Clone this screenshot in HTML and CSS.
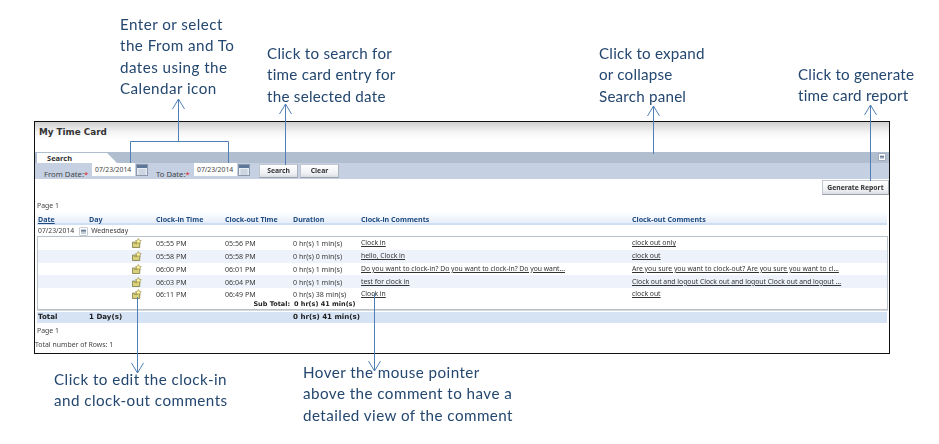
FILE: index.html
```html
<!DOCTYPE html>
<html lang="en">
<head>
<meta charset="utf-8">
<title>My Time Card</title>
<link rel="stylesheet" href="styles.css">
</head>
<body>
<main class="frame">
  <header class="title-bar"><h1>My Time Card</h1></header>
  <div class="tab-strip">
    <span class="tab">Search</span>
    <button class="collapse" aria-label="Collapse"></button>
  </div>
  <form class="search-panel">
    <label class="date-label">From Date:<i>*</i></label>
    <span class="date-input">07/23/2014</span>
    <svg class="cal" viewBox="0 0 12 12"><rect x="0.5" y="0.5" width="11" height="11" fill="#e8edf4" stroke="#8c99ac"/><rect x="1" y="1" width="10" height="3" fill="#5d7798"/><path d="M2 6h8M2 8h8M2 10h8M4 5v6M6 5v6M8 5v6" stroke="#b4bfce" stroke-width=".6"/></svg>
    <label class="date-label to">To Date:<i>*</i></label>
    <span class="date-input">07/23/2014</span>
    <svg class="cal" viewBox="0 0 12 12"><rect x="0.5" y="0.5" width="11" height="11" fill="#e8edf4" stroke="#8c99ac"/><rect x="1" y="1" width="10" height="3" fill="#5d7798"/><path d="M2 6h8M2 8h8M2 10h8M4 5v6M6 5v6M8 5v6" stroke="#b4bfce" stroke-width=".6"/></svg>
    <span class="btn search-btn">Search</span>
    <span class="btn">Clear</span>
  </form>
  <div class="actions"><span class="btn report">Generate Report</span></div>
  <p class="page page-top">Page 1</p>
  <div class="grid head">
    <a class="sort">Date</a><span>Day</span><span>Clock-in Time</span><span>Clock-out Time</span><span>Duration</span><span>Clock-in Comments</span><span>Clock-out Comments</span>
  </div>
  <div class="group"><span>07/23/2014</span><span class="mini"></span><span>Wednesday</span></div>
  <section class="box">
    <div class="grid row"><span></span><span class="ico"><svg viewBox="0 0 11 11"><path d="M.5 4.500h8v6h-8z" fill="#d9d27a" stroke="#6e6d3c" stroke-width=".8"/><path d="M2 6h3" stroke="#8f8c4a" stroke-width=".7"/><path d="M7 .5l1 2 2.200.4-1.600 1.500.4 2.100-2-1.100-2 1.100.4-2.100L3.800 2.900l2.200-.4z" fill="#fbf2a0" stroke="#8a7a2a" stroke-width=".6"/></svg></span><span>05:55 PM</span><span>05:56 PM</span><span>0 hr(s) 1 min(s)</span><a>Clock in</a><a>clock out only</a></div>
    <div class="grid row alt"><span></span><span class="ico"><svg viewBox="0 0 11 11"><path d="M.5 4.500h8v6h-8z" fill="#d9d27a" stroke="#6e6d3c" stroke-width=".8"/><path d="M2 6h3" stroke="#8f8c4a" stroke-width=".7"/><path d="M7 .5l1 2 2.200.4-1.600 1.500.4 2.100-2-1.100-2 1.100.4-2.100L3.800 2.900l2.200-.4z" fill="#fbf2a0" stroke="#8a7a2a" stroke-width=".6"/></svg></span><span>05:58 PM</span><span>05:58 PM</span><span>0 hr(s) 0 min(s)</span><a>hello, Clock in</a><a>clock out</a></div>
    <div class="grid row"><span></span><span class="ico"><svg viewBox="0 0 11 11"><path d="M.5 4.500h8v6h-8z" fill="#d9d27a" stroke="#6e6d3c" stroke-width=".8"/><path d="M2 6h3" stroke="#8f8c4a" stroke-width=".7"/><path d="M7 .5l1 2 2.200.4-1.600 1.500.4 2.100-2-1.100-2 1.100.4-2.100L3.800 2.900l2.200-.4z" fill="#fbf2a0" stroke="#8a7a2a" stroke-width=".6"/></svg></span><span>06:00 PM</span><span>06:01 PM</span><span>0 hr(s) 1 min(s)</span><a>Do you want to clock-in? Do you want to clock-in? Do you want...</a><a>Are you sure you want to clock-out? Are you sure you want to cl...</a></div>
    <div class="grid row alt"><span></span><span class="ico"><svg viewBox="0 0 11 11"><path d="M.5 4.500h8v6h-8z" fill="#d9d27a" stroke="#6e6d3c" stroke-width=".8"/><path d="M2 6h3" stroke="#8f8c4a" stroke-width=".7"/><path d="M7 .5l1 2 2.200.4-1.600 1.500.4 2.100-2-1.100-2 1.100.4-2.100L3.800 2.900l2.200-.4z" fill="#fbf2a0" stroke="#8a7a2a" stroke-width=".6"/></svg></span><span>06:03 PM</span><span>06:04 PM</span><span>0 hr(s) 1 min(s)</span><a>test for clock in</a><a>Clock out and logout Clock out and logout Clock out and logout ...</a></div>
    <div class="grid row"><span></span><span class="ico"><svg viewBox="0 0 11 11"><path d="M.5 4.500h8v6h-8z" fill="#d9d27a" stroke="#6e6d3c" stroke-width=".8"/><path d="M2 6h3" stroke="#8f8c4a" stroke-width=".7"/><path d="M7 .5l1 2 2.200.4-1.600 1.500.4 2.100-2-1.100-2 1.100.4-2.100L3.800 2.900l2.200-.4z" fill="#fbf2a0" stroke="#8a7a2a" stroke-width=".6"/></svg></span><span>06:11 PM</span><span>06:49 PM</span><span>0 hr(s) 38 min(s)</span><a>Clock in</a><a>clock out</a></div>
    <div class="subtotal"><b>Sub Total:</b><b>0 hr(s) 41 min(s)</b></div>
  </section>
  <div class="grid total"><b>Total</b><b class="wide">1 Day(s)</b><b class="dur">0 hr(s) 41 min(s)</b></div>
  <p class="page page-bottom">Page 1</p>
  <p class="page rows">Total number of Rows: 1</p>
</main>

<svg class="arrows" viewBox="0 0 939 444">
  <g fill="none" stroke="#4f7fb5" stroke-width="1">
    <path d="M178.500 99V141.500M130.500 163V141.500H228.500V163"/><path d="M172.500 109L178.500 99L184.500 109"/>
    <path d="M285.500 104V165"/><path d="M279.500 114L285.500 104L291.500 114"/>
    <path d="M653.500 106V154"/><path d="M647.500 116L653.500 106L659.500 116"/>
    <path d="M870.500 105V181"/><path d="M864.500 115L870.500 105L876.500 115"/>
    <path d="M137.500 297V373"/><path d="M131.500 363L137.500 373L143.500 363"/>
    <path d="M374.500 293V371"/><path d="M368.500 361L374.500 371L380.500 361"/>
  </g>
</svg>
<p class="note n1">Enter or select<br>the From and To<br>dates using the<br>Calendar icon</p>
<p class="note n2">Click to search for<br>time card entry for<br>the selected date</p>
<p class="note n3">Click to expand<br>or collapse<br>Search panel</p>
<p class="note n4">Click to generate<br>time card report</p>
<p class="note n5">Click to edit the clock-in<br>and clock-out comments</p>
<p class="note n6">Hover the mouse pointer<br>above the comment to have a<br>detailed view of the comment</p>
</body>
</html>
```
FILE: styles.css
```css
* { box-sizing: border-box; }
html, body { margin: 0; padding: 0; }
body {
  width: 939px; height: 444px; background: #fff; position: relative; overflow: hidden;
  font-family: "Noto Sans", "Liberation Sans", sans-serif; font-size: 7.1px; color: #3a3a3a;
}
.frame {
  position: absolute; left: 34px; top: 121px; width: 856px; height: 233px;
  border: 1px solid #111; display: flex; flex-direction: column; filter: blur(.25px);
}
.title-bar { height: 30px; padding: 2px 0 0 4px; background: linear-gradient(#cfcfcf, #f4f4f4 10px, #fff 17px); }
h1 { margin: 0; font: bold 8.800px/16px "DejaVu Sans", sans-serif; color: #333; }
.tab-strip { height: 11px; background: #b0bed0; display: flex; justify-content: space-between; align-items: flex-end; padding: 0 4px 0 2px; }
.tab {
  width: 80px; height: 10px; background: #fff; padding-left: 10px; font: bold 7.500px/10px "Noto Sans", sans-serif; color: #333;
  clip-path: polygon(0 0, 70px 0, 80px 100%, 0 100%);
}
.collapse { width: 6px; height: 6px; margin-bottom: 3px; padding: 0; border: 1px solid #fff; background: linear-gradient(#6f7f94 0 0) center/4px 1.500px no-repeat #c5cfdc; box-shadow: 0 0 0 .5px #8a97a8; }
.search-panel { height: 16px; background: #c5d1e3; display: flex; align-items: flex-start; padding-left: 9px; }
.date-label { width: 48px; padding-top: 6px; font-size: 7.700px; line-height: 10px; color: #444; }
.date-label.to { width: 38px; margin-left: 8px; }
.date-label i { color: #d22; font-style: normal; }
.date-input { width: 43px; height: 13px; background: #fff; font-size: 6.800px; line-height: 13px; padding-left: 3px; color: #444; }
.cal { width: 12px; height: 12px; margin: 1px 0 0 1px; flex: none; }
.btn {
  display: inline-block; width: 39px; height: 14px; margin-top: 1px; margin-right: 2px; background: linear-gradient(#fff, #eef0f3 70%, #d9dde3);
  border: 1px solid #c0c6ce; border-bottom-color: #9aa2ad; border-right-color: #aab1bb;
  text-align: center; font: bold 6.800px/12px "Noto Sans", sans-serif; color: #333;
}
.search-btn { margin-left: 9px; }
.actions { height: 19px; display: flex; justify-content: flex-end; padding: 1px 0 0; }
.report { width: 67px; height: 15px; margin: 0 0 0 0; line-height: 13px; }
.page { margin: 0; color: #444; line-height: 10px; font-size: 6.900px; }
.page-top { padding: 1px 0 0 2px; margin-top: 2px; height: 10px; }
.grid { display: grid; grid-template-columns: 51px 67px 69px 68px 68px 271px 1fr; align-items: center; }
.head {
  height: 13px; margin: 2px 2px 0 2px; padding: 3px 0 0 1px; background: linear-gradient(#fff, #e6eef9); border-bottom: 2px solid #cfdff3;
  font-weight: 700; color: #1d4a80; font-size: 7.100px; line-height: 8px;
}
.sort { text-decoration: underline; }
.group { height: 11px; margin-left: 3px; padding-top: 1px; display: flex; align-items: center; line-height: 10px; font-size: 6.800px; }
.mini { width: 7px; height: 7px; margin: 0 4px 0 6px; border: 1px solid #fff; background: linear-gradient(#6f7f94 0 0) center/5px 1.500px no-repeat #c5cfdc; box-shadow: 0 0 0 .5px #8a97a8; }
.box { margin: 0 0 0 2px; width: 851px; height: 74px; border: 1px solid #b9c2c9; box-shadow: 0 1px 0 #d5d9dd; }
.row { height: 12.750px; line-height: 12px; }
.alt { background: #edf2fb; }
.row a { text-decoration: underline; color: #333; white-space: nowrap; font-size: 6.800px; }
.ico { display: flex; justify-content: flex-end; padding-right: 14px; }
.ico svg { width: 10px; height: 10px; }
.subtotal { display: grid; grid-template-columns: 252px 1fr; column-gap: 4px; height: 9px; font: bold 6.500px/7px "DejaVu Sans", sans-serif; color: #222; }
.subtotal b:first-child { text-align: right; }
.total { height: 11px; margin: 1.500px 2px 0 2px; padding-left: 1px; background: #d5e3f5; font: bold 7.100px/10px "DejaVu Sans", sans-serif; color: #222; white-space: nowrap; }
.total .wide { grid-column: 2 / 5; }
.page-bottom { margin-top: 3px; padding-left: 2px; }
.rows { margin-top: 4px; }
.arrows { position: absolute; left: 0; top: 0; width: 939px; height: 444px; pointer-events: none; }
.note { position: absolute; margin: 0; font: 15.200px/21.300px Lato, "Open Sans", sans-serif; color: #24476f; white-space: nowrap; letter-spacing: .45px; }
.n1 { left: 120px; top: 14px; }
.n2 { left: 267px; top: 43px; letter-spacing: .25px; }
.n3 { left: 599px; top: 43px; letter-spacing: .2px; }
.n4 { left: 798px; top: 64px; letter-spacing: .2px; }
.n5 { left: 54px; top: 369px; }
.n6 { left: 303px; top: 362px; }
```
